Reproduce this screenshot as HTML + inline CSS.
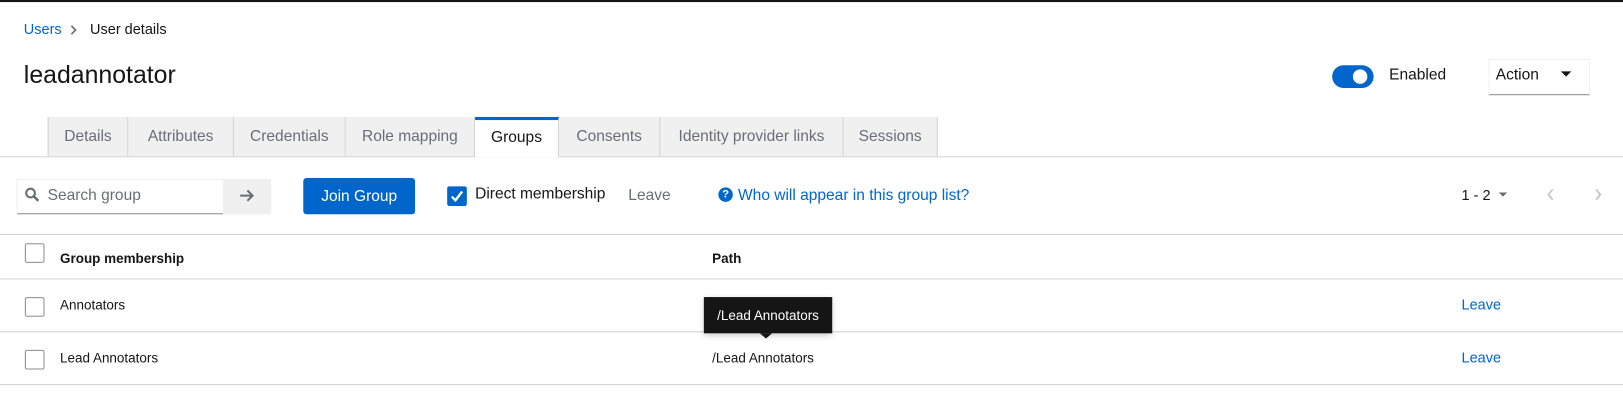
<!DOCTYPE html>
<html><head><style>
*{margin:0;padding:0;box-sizing:border-box}
body{width:1623px;height:413px;background:#fff;font-family:"Liberation Sans",sans-serif;color:#151515;position:relative;overflow:hidden;font-size:14px}
#w{position:absolute;left:0;top:0;width:1568px;height:400px;transform:scale(1.0351);transform-origin:0 0}
.a{position:absolute;white-space:nowrap}
.tab{position:absolute;top:113px;height:38px;background:#f0f0f0;border-right:1px solid #d2d2d2;color:#6a6e73;font-size:15px;line-height:38px;text-align:center}
.hl{position:absolute;left:0;width:1568px;height:1px;background:#d2d2d2}
.cb{position:absolute;width:19px;height:19px;border:1px solid #8a8d90;border-radius:2px;background:#fff}
.blue{color:#0066cc}
</style></head><body><div id="w">
<div class="a" style="left:0;top:0;width:1568px;height:2px;background:#151515"></div>
<div class="a blue" style="left:23px;top:20px;font-size:14px">Users</div>
<svg class="a" style="left:67px;top:24px" width="8" height="10" viewBox="0 0 8 10"><path d="M2 1L6 5L2 9" fill="none" stroke="#6a6e73" stroke-width="1.6"/></svg>
<div class="a" style="left:87px;top:20px;font-size:14px">User details</div>
<div class="a" style="left:23px;top:59px;font-size:24px">leadannotator</div>

<div class="a" style="left:1287px;top:63px;width:40px;height:22px;border-radius:11px;background:#0066cc"></div>
<div class="a" style="left:1307px;top:67px;width:14px;height:14px;border-radius:7px;background:#fff"></div>
<div class="a" style="left:1342px;top:64px;font-size:15px">Enabled</div>
<div class="a" style="left:1438px;top:57px;width:98px;height:35px;border:1px solid #f0f0f0;border-bottom:1px solid #8a8d90"></div>
<div class="a" style="left:1445px;top:64px;font-size:15px">Action</div>
<div class="a" style="left:1508px;top:69px;width:0;height:0;border-left:5px solid transparent;border-right:5px solid transparent;border-top:5px solid #151515"></div>

<div class="hl" style="top:151px"></div>
<div class="tab" style="left:46px;width:78px;border-left:1px solid #d2d2d2">Details</div>
<div class="tab" style="left:124px;width:102px">Attributes</div>
<div class="tab" style="left:226px;width:108px">Credentials</div>
<div class="tab" style="left:334px;width:125px">Role mapping</div>
<div class="tab" style="left:459px;width:81px;background:#fff;color:#151515;border-top:3px solid #0066cc;height:39px;line-height:33px">Groups</div>
<div class="tab" style="left:540px;width:98px">Consents</div>
<div class="tab" style="left:638px;width:177px">Identity provider links</div>
<div class="tab" style="left:815px;width:91px">Sessions</div>

<div class="a" style="left:16px;top:173px;width:200px;height:34px;border:1px solid #f0f0f0;border-bottom:1px solid #8a8d90"></div>
<svg class="a" style="left:24px;top:181px" width="14" height="14" viewBox="0 0 14 14"><circle cx="5.5" cy="5.5" r="4.2" fill="none" stroke="#6a6e73" stroke-width="2"/><path d="M8.5 8.5L13 13" stroke="#6a6e73" stroke-width="2.4"/></svg>
<div class="a" style="left:46px;top:180px;font-size:15px;color:#6a6e73">Search group</div>
<div class="a" style="left:216px;top:173px;width:46px;height:34px;background:#f0f0f0"></div>
<svg class="a" style="left:231px;top:182px" width="15" height="14" viewBox="0 0 15 14"><path d="M1 7H13M8 2L13 7L8 12" fill="none" stroke="#6a6e73" stroke-width="2"/></svg>
<div class="a" style="left:293px;top:172px;width:108px;height:35px;background:#0066cc;border-radius:3px;color:#fff;font-size:15px;line-height:35px;text-align:center">Join Group</div>
<div class="a" style="left:432px;top:180px;width:19px;height:19px;background:#0066cc;border-radius:2px"></div>
<svg class="a" style="left:434px;top:182px" width="15" height="15" viewBox="0 0 15 15"><path d="M2.5 8L6 11.5L12.5 3" fill="none" stroke="#fff" stroke-width="2.3"/></svg>
<div class="a" style="left:459px;top:179px;font-size:15px">Direct membership</div>
<div class="a" style="left:607px;top:180px;font-size:15px;color:#6a6e73">Leave</div>
<div class="a" style="left:694px;top:181px;width:14px;height:14px;border-radius:7px;background:#0066cc;color:#fff;font-size:11px;font-weight:bold;text-align:center;line-height:14px">?</div>
<div class="a blue" style="left:713px;top:180px;font-size:15px">Who will appear in this group list?</div>
<div class="a" style="left:1412px;top:180px;font-size:14px">1 - 2</div>
<div class="a" style="left:1448px;top:186px;width:0;height:0;border-left:4px solid transparent;border-right:4px solid transparent;border-top:4px solid #6a6e73"></div>
<svg class="a" style="left:1494px;top:182px" width="8" height="12" viewBox="0 0 8 12"><path d="M6 1L2 6L6 11" fill="none" stroke="#c7c7c7" stroke-width="1.8"/></svg>
<svg class="a" style="left:1540px;top:182px" width="8" height="12" viewBox="0 0 8 12"><path d="M2 1L6 6L2 11" fill="none" stroke="#c7c7c7" stroke-width="1.8"/></svg>

<div class="hl" style="top:226px"></div>
<div class="cb" style="left:24px;top:235px"></div>
<div class="a" style="left:58px;top:242px;font-size:13px;font-weight:bold">Group membership</div>
<div class="a" style="left:688px;top:242px;font-size:13px;font-weight:bold">Path</div>
<div class="hl" style="top:269px"></div>
<div class="cb" style="left:24px;top:287px"></div>
<div class="a" style="left:58px;top:287px;font-size:13px">Annotators</div>
<div class="a blue" style="left:1412px;top:286px;font-size:14px">Leave</div>
<div class="hl" style="top:320px"></div>
<div class="cb" style="left:24px;top:338px"></div>
<div class="a" style="left:58px;top:338px;font-size:13px">Lead Annotators</div>
<div class="a" style="left:688px;top:338px;font-size:13px">/Lead Annotators</div>
<div class="a blue" style="left:1412px;top:337px;font-size:14px">Leave</div>
<div class="hl" style="top:371px"></div>

<div class="a" style="left:680px;top:287px;width:124px;height:35px;background:#151515;color:#fff;font-size:13px;line-height:35px;text-align:center;box-shadow:0 2px 6px rgba(0,0,0,.2)">/Lead Annotators</div>
<div class="a" style="left:734px;top:322px;width:0;height:0;border-left:6px solid transparent;border-right:6px solid transparent;border-top:5px solid #151515"></div>
</div></body></html>
